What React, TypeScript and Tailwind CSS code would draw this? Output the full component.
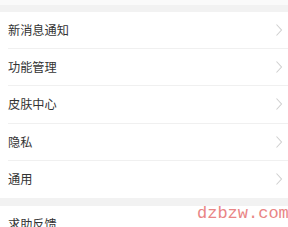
const items = ['新消息通知', '功能管理', '皮肤中心', '隐私', '通用'];

function Chevron() {
  return (
    <svg width="8" height="14" viewBox="0 0 8 14" fill="none" className="shrink-0">
      <path d="M1.5 1.5 L6.5 7 L1.5 12.5" stroke="#d0d0d0" strokeWidth="1.1" />
    </svg>
  );
}

function Row({ label, last }: { label: string; last?: boolean }) {
  return (
    <div className="pl-2 bg-white">
      <div className={`h-[37.2px] flex items-center justify-between pr-[5px] ${last ? '' : 'border-b border-[#f0f0f0]'}`}>
        <span className="text-[12.2px] text-[#333]">{label}</span>
        <Chevron />
      </div>
    </div>
  );
}

export default function App() {
  return (
    <div
      className="relative w-[288px] h-[227px] overflow-hidden bg-white"
      style={{ fontFamily: '"Noto Sans CJK SC", "Noto Sans", sans-serif' }}
    >
      <div className="h-[5px] bg-[#fafafa]" />
      <div className="h-[7px] bg-[#f2f2f2]" />
      {items.map((t, i) => (
        <Row key={t} label={t} last={i === items.length - 1} />
      ))}
      <div className="h-[8px] bg-[#f2f2f2]" />
      <div className="pl-2 h-[37px] flex items-center">
        <span className="text-[12.2px] text-[#333]">求助反馈</span>
      </div>
      <div
        className="absolute left-[197px] top-[201px] text-[17px] text-[#e98585]"
        style={{ fontFamily: '"Liberation Mono", monospace' }}
      >
        dzbzw.com
      </div>
    </div>
  );
}
